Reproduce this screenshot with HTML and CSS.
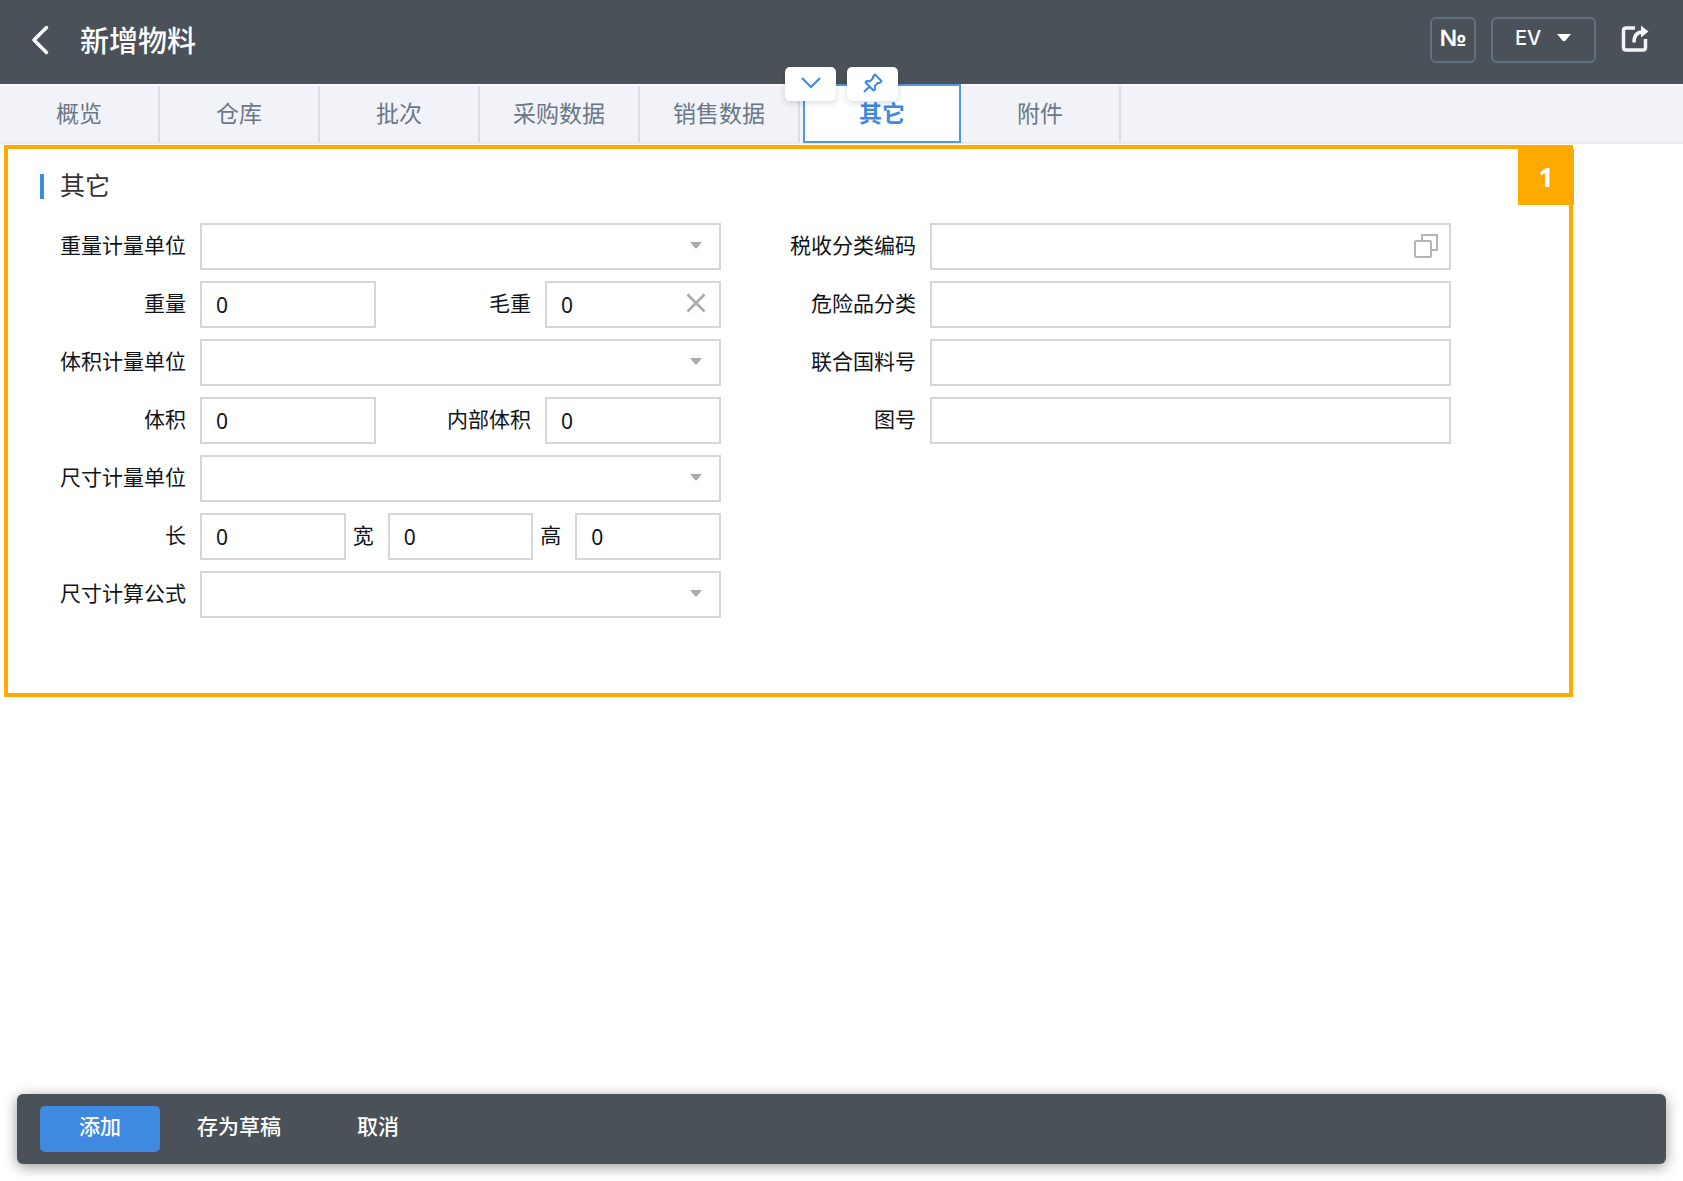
FILE: index.html
```html
<!DOCTYPE html>
<html lang="zh-CN">
<head>
    <meta charset="UTF-8">
    <meta name="viewport" content="width=device-width, initial-scale=1.0">
    <title>新增物料</title>
    <link rel="stylesheet" href="styles.css">
</head>
<body>
    <header class="topbar">
        <button type="button" class="back" aria-label="返回">
            <svg width="18" height="30" viewBox="0 0 18 30"><path d="M15.500 2.500L3 15l12.500 12.500" fill="none" stroke="#fff" stroke-width="3.500" stroke-linecap="round" stroke-linejoin="round"/></svg>
        </button>
        <h1>新增物料</h1>
        <div class="tools">
            <button type="button" class="tool number">№</button>
            <button type="button" class="tool lang">EV
                <svg width="16" height="8" viewBox="0 0 16 8"><path d="M1 0h14L9.500 6.500q-1.500 1.500-3 0z" fill="#fff"/></svg>
            </button>
            <button type="button" class="share" aria-label="打开">
                <svg width="28" height="28" viewBox="0 0 28 28" fill="none" stroke="#f2f3f4" stroke-width="3.500">
                    <path d="M14 3H5Q2.500 3 2.500 5.500V22.500Q2.500 25 5 25H22Q24.500 25 24.500 22.500V14" stroke-linejoin="round"/>
                    <path d="M13 17.500Q13 7.500 21 7"/>
                    <path d="M20 .5L27.500 6.500L20 12.500z" fill="#f2f3f4" stroke="none"/>
                </svg>
            </button>
        </div>
        <div class="floating">
            <button type="button" aria-label="展开">
                <svg width="22" height="14" viewBox="0 0 22 14"><path d="M2 2l9 9 9-9" fill="none" stroke="#3f8ae0" stroke-width="2"/></svg>
            </button>
            <button type="button" aria-label="固定">
                <svg width="20" height="20" viewBox="0 0 20 20" fill="none" stroke="#3f8ae0" stroke-width="2" stroke-linejoin="round"><path d="M12 1.500L18.500 8L16.500 10L15 9.800L11.800 13L12 16.500L10.500 17.500L2.500 9.500L3.500 8L7 8.200L10.300 5L10 3.500zM6.500 13.500L1 19"/></svg>
            </button>
        </div>
    </header>

    <nav class="tabs">
        <a href="#">概览</a>
        <a href="#">仓库</a>
        <a href="#">批次</a>
        <a href="#">采购数据</a>
        <a href="#">销售数据</a>
        <a href="#" class="active">其它</a>
        <a href="#">附件</a>
    </nav>

    <main>
        <section class="panel">
            <span class="badge">1</span>
            <h2>其它</h2>
            <form class="form" id="item">
                <div class="column">
                    <div class="row">
                        <label for="weightUnit">重量计量单位</label>
                        <div class="field">
                            <select id="weightUnit"><option></option></select>
                            <svg class="caret" width="12" height="7" viewBox="0 0 12 7"><path d="M0 0h12L7 6q-1 1-2 0z"/></svg>
                        </div>
                    </div>
                    <div class="row">
                        <label for="weight">重量</label>
                        <div class="field"><input type="text" id="weight" value="0"></div>
                        <label for="gross" class="second">毛重</label>
                        <div class="field">
                            <input type="text" id="gross" value="0">
                            <button type="button" class="clear" aria-label="清除">
                                <svg width="20" height="20" viewBox="0 0 20 20"><path d="M1.500 1.500l17 17M18.500 1.500l-17 17" stroke="#a9a9a9" stroke-width="2.500"/></svg>
                            </button>
                        </div>
                    </div>
                    <div class="row">
                        <label for="volumeUnit">体积计量单位</label>
                        <div class="field">
                            <select id="volumeUnit"><option></option></select>
                            <svg class="caret" width="12" height="7" viewBox="0 0 12 7"><path d="M0 0h12L7 6q-1 1-2 0z"/></svg>
                        </div>
                    </div>
                    <div class="row">
                        <label for="volume">体积</label>
                        <div class="field"><input type="text" id="volume" value="0"></div>
                        <label for="inner" class="second">内部体积</label>
                        <div class="field"><input type="text" id="inner" value="0"></div>
                    </div>
                    <div class="row">
                        <label for="sizeUnit">尺寸计量单位</label>
                        <div class="field">
                            <select id="sizeUnit"><option></option></select>
                            <svg class="caret" width="12" height="7" viewBox="0 0 12 7"><path d="M0 0h12L7 6q-1 1-2 0z"/></svg>
                        </div>
                    </div>
                    <div class="row">
                        <label for="long">长</label>
                        <div class="field"><input type="text" id="long" value="0"></div>
                        <label for="wide" class="short">宽</label>
                        <div class="field"><input type="text" id="wide" value="0"></div>
                        <label for="high" class="short">高</label>
                        <div class="field"><input type="text" id="high" value="0"></div>
                    </div>
                    <div class="row">
                        <label for="formula">尺寸计算公式</label>
                        <div class="field">
                            <select id="formula"><option></option></select>
                            <svg class="caret" width="12" height="7" viewBox="0 0 12 7"><path d="M0 0h12L7 6q-1 1-2 0z"/></svg>
                        </div>
                    </div>
                </div>
                <div class="column">
                    <div class="row">
                        <label for="tax">税收分类编码</label>
                        <div class="field">
                            <input type="text" id="tax">
                            <button type="button" class="pick" aria-label="选择">
                                <svg width="26" height="26" viewBox="0 0 26 26" fill="none" stroke="#b4b4b4" stroke-width="2"><path d="M9 7V2h15v15h-6"/><rect x="2" y="8" width="16" height="16" rx="1"/></svg>
                            </button>
                        </div>
                    </div>
                    <div class="row">
                        <label for="danger">危险品分类</label>
                        <div class="field"><input type="text" id="danger"></div>
                    </div>
                    <div class="row">
                        <label for="unNumber">联合国料号</label>
                        <div class="field"><input type="text" id="unNumber"></div>
                    </div>
                    <div class="row">
                        <label for="drawing">图号</label>
                        <div class="field"><input type="text" id="drawing"></div>
                    </div>
                </div>
            </form>
        </section>
    </main>

    <footer class="actions">
        <button type="submit" form="item" class="primary">添加</button>
        <button type="button" class="draft">存为草稿</button>
        <button type="button">取消</button>
    </footer>
</body>
</html>
```

FILE: styles.css
```css
* {
    box-sizing: border-box;
}

body {
    display: flex;
    flex-direction: column;
    min-height: 100vh;
    margin: 0;
    background: #fff;
    color: #101418;
    font-family: "Noto Sans CJK SC", sans-serif;
    font-size: 21px;
}

button, input, select {
    font: inherit;
    color: inherit;
    margin: 0;
    padding: 0;
}

button {
    border: none;
    background: none;
    cursor: pointer;
}

svg {
    display: block;
}

.topbar {
    position: relative;
    display: flex;
    align-items: center;
    height: 84px;
    padding: 0 34px 4px 31px;
    background: #4a5158;
    color: #fff;
}

.topbar h1 {
    margin: 0 0 0 31px;
    padding-bottom: 2px;
    font-size: 29px;
    line-height: 40px;
    font-weight: 500;
}

.tools {
    display: flex;
    align-items: center;
    gap: 15px;
    margin-left: auto;
}

.tool {
    display: flex;
    align-items: center;
    justify-content: center;
    height: 46px;
    padding-bottom: 4px;
    border: 2px solid #61727f;
    border-radius: 6px;
}

.number {
    width: 46px;
    font-family: "Liberation Sans", sans-serif;
    font-size: 24px;
    font-weight: 700;
}

.lang {
    width: 105px;
    gap: 15px;
    font-family: Inter, sans-serif;
    font-size: 20px;
    font-weight: 500;
}

.share {
    margin-left: 10px;
    padding-bottom: 2px;
}

/* small buttons hanging over the tab row */
.floating {
    position: absolute;
    top: 67px;
    left: 785px;
    display: flex;
    gap: 11px;
}

.floating button {
    display: flex;
    align-items: center;
    justify-content: center;
    width: 51px;
    height: 34px;
    padding-bottom: 2px;
    border-radius: 5px;
    background: #fff;
    box-shadow: 0 2px 6px rgba(0, 0, 0, 0.15);
}

.tabs {
    display: flex;
    height: 60px;
    border-top: 2px solid #fafafc;
    border-bottom: 2px solid #e9ebef;
    background: #f2f3f8;
}

.tabs a {
    width: 160px;
    border-right: 2px solid #dcdde7;
    color: #6b7785;
    font-size: 23px;
    line-height: 52px;
    text-align: center;
    text-decoration: none;
}

.tabs .active {
    margin: -2px 0 -1px 3px;
    width: 158px;
    border: 2px solid #4f96e4;
    background: #fff;
    color: #3f8ae0;
    font-weight: 700;
}

main {
    flex: 1;
}

.panel {
    position: relative;
    margin: 1px 110px 0 4px;
    padding: 17px 118px 75px 32px;
    border: 4px solid #ffaa00;
}

.badge {
    position: absolute;
    top: 0;
    right: -5px;
    width: 56px;
    background: #ffaa00;
    color: #fff;
    font-family: "Noto Sans", sans-serif;
    font-size: 27px;
    font-weight: 700;
    line-height: 56px;
    text-align: center;
}

.panel h2 {
    display: flex;
    align-items: center;
    gap: 16px;
    margin: 0 0 21px;
    color: #333;
    font-size: 25px;
    font-weight: 400;
    line-height: 36px;
}

.panel h2::before {
    content: "";
    width: 4px;
    height: 25px;
    margin-top: 4px;
    background: #3f8ae0;
}

.form {
    display: flex;
    gap: 49px;
}

.column {
    display: flex;
    flex: 1;
    flex-direction: column;
    gap: 11px;
}

.row {
    display: flex;
    align-items: center;
}

.row label {
    width: 160px;
    padding: 0 14px 5px 0;
    line-height: 32px;
    text-align: right;
    white-space: nowrap;
}

.row .second {
    width: 169px;
}

.row .short {
    width: 42px;
}

.field {
    position: relative;
    flex: 1;
}

.field input,
.field select {
    display: block;
    width: 100%;
    height: 47px;
    padding: 0 14px;
    border: 2px solid #d6d6d6;
    border-radius: 0;
    background: #fff;
    font-family: "Noto Sans", "Noto Sans CJK SC", sans-serif;
    appearance: none;
}

.caret {
    position: absolute;
    top: 19px;
    right: 19px;
    fill: #a9a9a9;
    pointer-events: none;
}

.clear {
    position: absolute;
    top: 12px;
    right: 15px;
}

.pick {
    position: absolute;
    top: 10px;
    right: 12px;
}

.actions {
    display: flex;
    align-items: center;
    height: 70px;
    margin: 0 17px 17px;
    padding: 0 23px;
    border-radius: 6px;
    background: #4a5158;
    box-shadow: 0 3px 14px rgba(0, 0, 0, 0.4);
    color: #fff;
}

.actions button {
    width: 120px;
    height: 46px;
    padding-bottom: 8px;
    border-radius: 5px;
    font-weight: 500;
}

.actions .primary {
    background: #3f8ae0;
}

.actions .draft {
    width: 158px;
}
```
